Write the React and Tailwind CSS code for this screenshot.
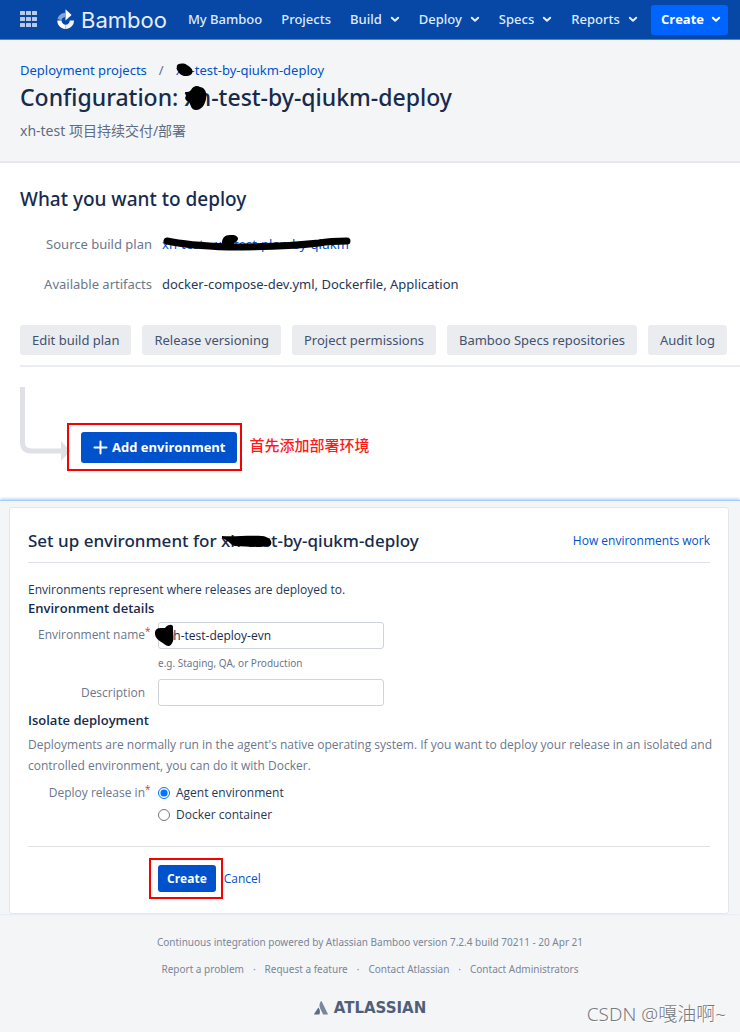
import React from "react";

function Chevron() {
  return (
    <svg width="10" height="7" viewBox="0 0 10 7" fill="none" aria-hidden="true">
      <path d="M1.8 1.7 5 4.8l3.2-3.1" stroke="currentColor" strokeWidth="2" strokeLinecap="round" strokeLinejoin="round" />
    </svg>
  );
}

function BambooMark() {
  return (
    <svg width="18" height="21" viewBox="0 0 18 21" aria-hidden="true">
      <path d="M8.500.3 14.600 6 8.500 11.500z" fill="#fff" />
      <path d="M8.500 3.800v4.300C6.400 8.200 4.900 9.400 4.500 11.200L.5 10C1.500 6.400 4.600 4 8.500 3.800z" fill="#86a5d8" />
      <path d="M.3 11.600h4.200c.2 2.600 2 4.200 4.100 4.200v4.300C4 20 .3 16.500.3 11.600z" fill="#fff" />
      <path d="M8.600 15.800c2.300 0 4-1.600 4.200-4.200H17c0 4.900-3.700 8.400-8.400 8.500z" fill="#eef3fb" />
    </svg>
  );
}

function AppSwitcher() {
  return (
    <svg width="18" height="17" viewBox="0 0 18 17" fill="#b9cbe9" aria-hidden="true">
      {[0, 6, 12].map((y) => [0, 6, 12].map((x) => <rect key={x + "-" + y} x={x} y={y} width="5" height="4" rx=".5" />))}
    </svg>
  );
}

function NavLink({ children, menu }) {
  return menu ? (
    <button type="button" className="flex shrink-0 items-center gap-2 whitespace-nowrap">
      {children}
      <Chevron />
    </button>
  ) : (
    <a href="#" className="shrink-0 whitespace-nowrap">{children}</a>
  );
}

function TopBar() {
  return (
    <header className="flex h-10 items-center border-b border-[#5583c8] bg-[#0747a6] pl-5 pr-3 text-[13px] font-medium text-[#deebff]">
      <button type="button" aria-label="Applications" className="mr-[19px] shrink-0"><AppSwitcher /></button>
      <a href="#" className="mr-[21px] flex shrink-0 items-center gap-1.5 font-[Inter] text-[22px] leading-6 font-normal text-[#e6eefb]">
        <BambooMark />
        Bamboo
      </a>
      <nav className="flex flex-1 items-center gap-[19px]">
        <NavLink>My Bamboo</NavLink>
        <NavLink>Projects</NavLink>
        <NavLink menu>Build</NavLink>
        <NavLink menu>Deploy</NavLink>
        <NavLink menu>Specs</NavLink>
        <NavLink menu>Reports</NavLink>
      </nav>
      <button type="button" className="flex h-[30px] shrink-0 items-center gap-[7px] rounded-[3px] bg-[#0065ff] pr-[7px] pl-2.5 font-['Open_Sans'] font-bold text-white">
        Create
        <Chevron />
      </button>
    </header>
  );
}

function PageHeader() {
  return (
    <section className="border-b-2 border-[#e6e8ec] bg-[#f4f5f7] px-5 pt-[21px] pb-5">
      <nav aria-label="Breadcrumb" className="flex h-5 items-center text-[13px]">
        <a href="#" className="text-[#0052cc]">Deployment projects</a>
        <span className="mx-3 text-[#5e6c84]">/</span>
        <a href="#" className="relative text-[#0052cc]">
          xh-test-by-qiukm-deploy
          <svg className="absolute top-0 left-0" width="18" height="18" viewBox="0 0 18 18" aria-hidden="true">
            <path d="M.8 5C2 2 8 2 11 4s6 4 5.500 7-4 4.500-8 4S2 11 .8 8z" fill="#000" />
          </svg>
        </a>
      </nav>
      <h1 className="text-[23px] leading-8 font-medium text-[#172b4d]">
        Configuration:{" "}
        <span className="relative">
          xh-test-by-qiukm-deploy
          <svg className="absolute top-1 left-0" width="25" height="26" viewBox="0 0 25 26" aria-hidden="true">
            <path d="M1 7c3 0 4 0 6-2 2-4 6-5 9-3 6 1 7 7 6 12s-4 11-10 11c-5 0-5-5-7-8-3-1-5-4-3-6z" fill="#000" />
          </svg>
        </span>
      </h1>
      <p className="mt-2 text-[14px] leading-5 text-[#5e6c84]">xh-test 项目持续交付/部署</p>
    </section>
  );
}

const actions = ["Edit build plan", "Release versioning", "Project permissions", "Bamboo Specs repositories", "Audit log"];

function DeploySource() {
  return (
    <section className="bg-white pt-5 pl-5">
      <h2 className="text-[19px] leading-8 font-medium text-[#172b4d]">What you want to deploy</h2>
      <dl className="mt-[19px] grid grid-cols-[132px_1fr] gap-x-2.5 gap-y-5 text-[13px] leading-5">
        <dt className="text-right text-[#6b778c]">Source build plan</dt>
        <dd>
          <a href="#" className="relative text-[#0052cc]">
            xh-test › xh-test-plan-by-qiukm
            <svg className="absolute top-0 left-0" width="192" height="20" viewBox="0 0 192 20" fill="none" aria-hidden="true">
              <path d="M5 6c18 4 36 5 62 6 38 0 72-2 90-4 11-2 20-2 28-2" stroke="#000" strokeWidth="7" strokeLinecap="round" />
              <path d="M60 12c-1-8 2-12 8-12 6-1 10 3 7 6-3 2-4 3-5 6z" fill="#000" />
            </svg>
          </a>
        </dd>
        <dt className="text-right text-[#6b778c]">Available artifacts</dt>
        <dd className="text-[#253858]">docker-compose-dev.yml, Dockerfile, Application</dd>
      </dl>
      <div className="mt-[31px] flex flex-wrap gap-[11px] pb-2.5 text-[13px] leading-5">
        {actions.map((label) => (
          <button key={label} type="button" className="h-[30px] rounded-[3px] bg-[#ebecf0] px-3 whitespace-nowrap text-[#42526e]">
            {label}
          </button>
        ))}
      </div>
      <hr className="border-t-2 border-[#ebecf0]" />
      <div className="flex items-start pt-5 pb-[29px]">
        <svg className="shrink-0 overflow-visible" width="47" height="74" viewBox="0 0 47 74" fill="none" aria-hidden="true">
          <path d="M2.500 0v55q0 9 9 9H42" stroke="#dfe1e6" strokeWidth="5" />
          <path d="M41 54l9.500 10-9.500 10z" fill="#dfe1e6" />
        </svg>
        <div className="mt-9 flex items-start gap-2">
          <div className="border-2 border-[#f60000] pt-[7px] pr-[3px] pb-1.5 pl-3">
            <button type="button" className="flex h-[31px] items-center gap-1 rounded-[3px] bg-[#0052cc] pr-[11px] pl-3 font-['Open_Sans'] text-[13px] font-bold whitespace-nowrap text-white">
              <svg width="15" height="15" viewBox="0 0 15 15" aria-hidden="true">
                <path d="M7.500 1.500v12M1.500 7.500h12" stroke="currentColor" strokeWidth="2" strokeLinecap="round" />
              </svg>
              Add environment
            </button>
          </div>
          <p className="mt-2.5 text-[15px] leading-6 font-medium text-[#ff1a1a]">首先添加部署环境</p>
        </div>
      </div>
    </section>
  );
}

function Required() {
  return <span aria-hidden="true" className="absolute -top-1 left-full text-[10px] text-[#de350b]">*</span>;
}

const field = "h-[27px] w-[226px] rounded-[3px] border border-[#cfd3da] bg-white px-2 text-[12px] text-[#172b4d]";

function EnvironmentForm() {
  return (
    <section className="border-t border-[#a5cdfa] bg-[#f4f5f7] pt-1.5 pr-[11px] pl-[9px] shadow-[0_-1px_3px_#a5cdfa]">
      <form className="rounded-[3px] border border-[#e4e6ea] bg-white px-[18px] pt-[17px] pb-3.5 font-['Open_Sans'] text-[12px] text-[#253858]" onSubmit={(e) => e.preventDefault()}>
        <div className="flex items-center justify-between border-b border-[#dfe1e6] pb-[5px]">
          <h2 className="font-['Noto_Sans'] text-[17px] leading-8 font-medium text-[#172b4d]">
            Set up environment for{" "}
            <span className="relative">
              xh-test-by-qiukm-deploy
              <svg className="absolute top-[5px] left-0" width="51" height="14" viewBox="0 0 51 14" aria-hidden="true">
                <path d="M1 2c12 1 26-1 40 0 10 1 12 9 6 10-12 2-23 0-33 0C9 11 9 7 1 4z" fill="#000" />
              </svg>
            </span>
          </h2>
          <a href="#" className="text-[#0052cc]">How environments work</a>
        </div>
        <p className="mt-[17px] leading-5">Environments represent where releases are deployed to.</p>
        <h3 className="text-[13px] leading-4 font-semibold text-[#172b4d]">Environment details</h3>
        <div className="mt-1.5 grid grid-cols-[117px_1fr] gap-x-[13px]">
          <label htmlFor="env-name" className="relative justify-self-end leading-[26px] text-[#6b778c]">
            Environment name
            <Required />
          </label>
          <div className="relative">
            <input id="env-name" type="text" defaultValue="xh-test-deploy-evn" className={field} />
            <svg className="absolute top-0.5 -left-1" width="21" height="23" viewBox="0 0 21 23" aria-hidden="true">
              <path d="M1 8c1-5 6-4 10-4 3-4 8-4 8-1 0 6 1 12 0 14-2 6-5 6-9 3C6 17 0 14 1 8z" fill="#000" />
            </svg>
            <p className="mt-1 font-['Noto_Sans'] text-[10px] leading-5 text-[#6b778c]">e.g. Staging, QA, or Production</p>
          </div>
        </div>
        <div className="mt-1.5 grid grid-cols-[117px_1fr] items-center gap-x-[13px]">
          <label htmlFor="env-desc" className="justify-self-end text-[#6b778c]">Description</label>
          <input id="env-desc" type="text" className={field} />
        </div>
        <h3 className="mt-1.5 text-[13px] leading-4 font-semibold text-[#172b4d]">Isolate deployment</h3>
        <p className="mt-1.5 -mr-2 leading-[21px] text-[#6b778c]">
          Deployments are normally run in the agent's native operating system. If you want to deploy your release in an isolated and controlled environment, you can do it with Docker.
        </p>
        <div role="radiogroup" aria-labelledby="target-label" className="mt-1.5 grid grid-cols-[117px_1fr] gap-x-[13px] leading-[22px]">
          <span id="target-label" className="relative justify-self-end text-[#6b778c]">
            Deploy release in
            <Required />
          </span>
          <div>
            <label className="flex items-center gap-1.5">
              <input type="radio" name="target" defaultChecked className="size-3 accent-[#0075ff]" />
              Agent environment
            </label>
            <label className="flex items-center gap-1.5">
              <input type="radio" name="target" className="size-3 accent-[#0075ff]" />
              Docker container
            </label>
          </div>
        </div>
        <div className="mt-5 flex items-center border-t border-[#dfe1e6] pt-[11px] pl-[121px]">
          <div className="border-2 border-[#f60000] py-[5px] pr-[5px] pl-[7px]">
            <button type="submit" className="h-[27px] rounded-[3px] bg-[#0052cc] px-[9px] font-bold text-white">Create</button>
          </div>
          <a href="#" className="ml-px text-[#0052cc]">Cancel</a>
        </div>
      </form>
    </section>
  );
}

const links = ["Report a problem", "Request a feature", "Contact Atlassian", "Contact Administrators"];

function Footer() {
  return (
    <footer className="relative flex flex-1 flex-col items-center px-5 pt-[18px] pb-2 text-[10px] text-[#7a869a]">
      <p className="leading-5">Continuous integration powered by Atlassian Bamboo version 7.2.4 build 70211 - 20 Apr 21</p>
      <ul className="mt-[7px] flex leading-5">
        {links.map((label, i) => (
          <li key={label} className="flex">
            {i > 0 && <span className="mx-[9px]">·</span>}
            <a href="#">{label}</a>
          </li>
        ))}
      </ul>
      <a href="#" className="mt-[17px] flex items-center gap-1.5 font-['DejaVu_Sans'] text-[15px] leading-6 font-bold text-[#505f79]">
        <svg width="14" height="14" viewBox="0 0 14 14" aria-hidden="true">
          <path d="M4.300 6.500c1.800 1.900 2.100 4.600 1 7.100H.3c-.3 0-.4-.2-.2-.5z" fill="#5e6c84" />
          <path d="M6.900.3c.2-.3.500-.3.700 0l6.300 12.800c.1.300 0 .5-.3.500H9.100L6.200 7.500C5 5 5.300 2.700 6.900.3z" fill="#7a869a" />
        </svg>
        ATLASSIAN
      </a>
      <span className="absolute right-3.5 bottom-1 text-[19px] leading-7 font-light text-[#777a80] [text-shadow:1px_1px_0_#fff]">CSDN @嘎油啊~</span>
    </footer>
  );
}

export default function App() {
  return (
    <div className="flex min-h-screen flex-col bg-[#f4f5f7] font-['Noto_Sans','Noto_Sans_CJK_SC',sans-serif]">
      <TopBar />
      <main>
        <PageHeader />
        <DeploySource />
        <EnvironmentForm />
      </main>
      <Footer />
    </div>
  );
}
